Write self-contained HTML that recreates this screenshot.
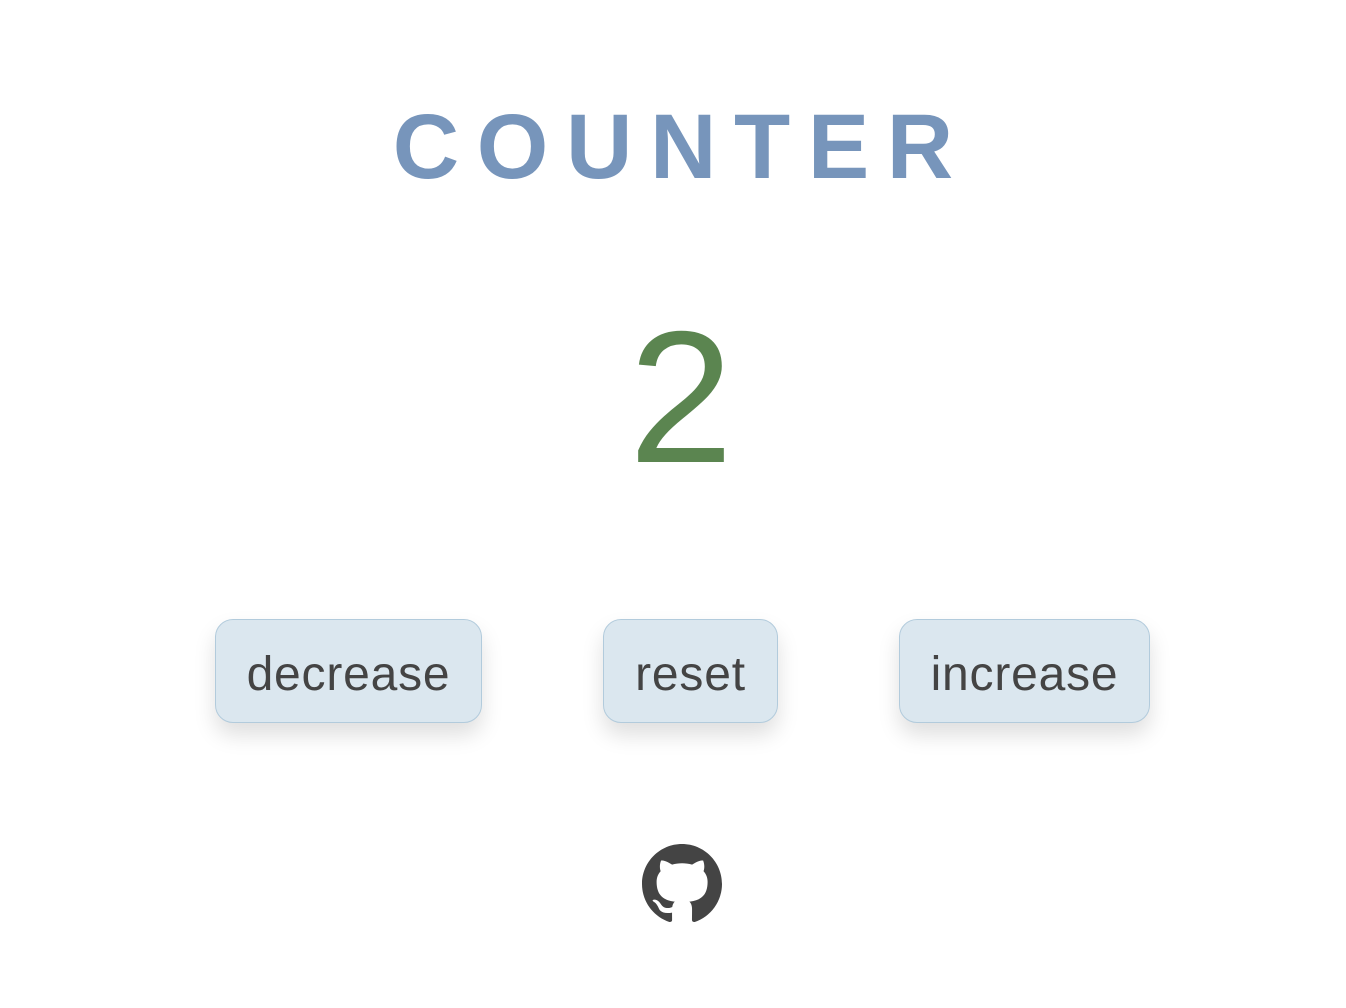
<!DOCTYPE html>
<html><head><meta charset="utf-8"><style>
html,body{margin:0;padding:0;background:#fff;width:1346px;height:1008px;overflow:hidden;font-family:"Liberation Sans",sans-serif}
.t{position:absolute;left:0;width:1346px;text-align:center;font-weight:bold;font-size:92px;line-height:92px;top:101px;color:#7795bb;letter-spacing:17.6px;text-indent:17.6px}
.n{position:absolute;left:8px;width:1346px;text-align:center;font-size:188px;line-height:188px;top:303px;color:#5b8550}
.b{position:absolute;top:619px;height:102px;box-sizing:content-box;border:1px solid #b2cbdc;background:#dbe7ef;border-radius:18px;box-shadow:0 12px 22px rgba(0,0,0,0.13);color:#444;font-size:48px;letter-spacing:0.8px;text-align:center;}
.b span{display:block;padding-top:7px;line-height:95px}
</style></head><body>
<div class="t">COUNTER</div>
<div class="n">2</div>
<div class="b" style="left:215px;width:265px"><span>decrease</span></div>
<div class="b" style="left:603px;width:173px"><span>reset</span></div>
<div class="b" style="left:899px;width:249px"><span>increase</span></div>
<svg style="position:absolute;left:642px;top:844px" width="80" height="80" viewBox="0 0 16 16"><path fill="#444" d="M8 0C3.58 0 0 3.58 0 8c0 3.54 2.29 6.53 5.47 7.59.4.07.55-.17.55-.38 0-.19-.01-.82-.01-1.49-2.01.37-2.53-.49-2.69-.94-.09-.23-.48-.94-.82-1.13-.28-.15-.68-.52-.01-.53.63-.01 1.08.58 1.23.82.72 1.21 1.87.87 2.33.66.07-.52.28-.87.51-1.07-1.78-.2-3.64-.89-3.64-3.95 0-.87.31-1.59.82-2.15-.08-.2-.36-1.02.08-2.12 0 0 .67-.21 2.2.82.64-.18 1.32-.27 2-.27.68 0 1.36.09 2 .27 1.53-1.04 2.2-.82 2.2-.82.44 1.1.16 1.92.08 2.12.51.56.82 1.27.82 2.15 0 3.07-1.87 3.75-3.65 3.95.29.25.54.73.54 1.48 0 1.07-.01 1.93-.01 2.2 0 .21.15.46.55.38A8.013 8.013 0 0016 8c0-4.42-3.58-8-8-8z"/></svg>
</body></html>
